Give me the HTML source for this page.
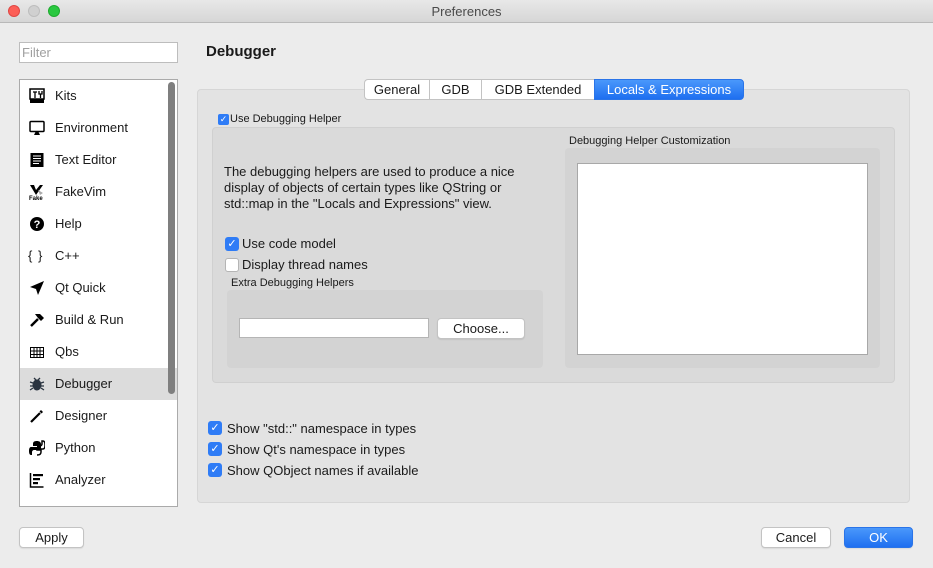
<!DOCTYPE html>
<html><head><style>
*{box-sizing:border-box;margin:0;padding:0}
body{width:933px;height:568px;background:#ececec;font-family:"Liberation Sans",sans-serif;color:#1a1a1a;position:relative;overflow:hidden;font-size:13px}
.a{position:absolute}
.title{left:0;top:0;width:933px;height:23px;background:linear-gradient(#e8e8e8,#d6d6d6);border-bottom:1px solid #b9b9b9;text-align:center;line-height:23px;color:#4a4a4a;font-size:13px}
.dot{top:5px;width:12px;height:12px;border-radius:50%}
.item{left:20px;width:147px;height:32px;line-height:32px;padding-left:35px;font-size:13px}
.ic{position:absolute;left:9px;top:8px;width:16px;height:16px}
.cb{width:14px;height:14px;border-radius:3px;background:#2f7cf6;color:#fff;font-size:11px;line-height:14px;text-align:center}
.cbo{width:14px;height:14px;border-radius:3px;background:#fff;border:1px solid #b5b5b5}
.btn{background:#fff;border:1px solid #c3c3c3;border-radius:4px;text-align:center;font-size:13px;box-shadow:0 1px 1px rgba(0,0,0,.08)}
.tab{top:79px;height:21px;line-height:20px;text-align:center;background:#fff;border:1px solid #c3c3c3;border-right:none;font-size:13px}
</style></head><body>
<div class="a title">Preferences</div>
<div class="a dot" style="left:8px;background:#fc5f57;border:1px solid #df4744"></div>
<div class="a dot" style="left:28px;background:#d0d0d0;border:1px solid #bdbdbd"></div>
<div class="a dot" style="left:48px;background:#2ac840;border:1px solid #1eab2e"></div>

<div class="a" style="left:19px;top:42px;width:159px;height:21px;background:#fff;border:1px solid #bdbdbd;color:#a0a0a0;font-size:13px;line-height:19px;padding-left:2px">Filter</div>

<div class="a" style="left:19px;top:79px;width:159px;height:428px;background:#fff;border:1px solid #aaa;overflow:hidden">
</div>
<div class="a" style="left:20px;top:368px;width:157px;height:32px;background:#dcdcdc"></div>
<div class="a" style="left:168px;top:82px;width:7px;height:312px;background:#7f7f7f;border-radius:4px"></div>

<div class="a item" style="top:80px"><svg class="ic" viewBox="0 0 16 16"><rect x="1" y="1" width="14" height="10" fill="none" stroke="#000" stroke-width="1.5"/><rect x="1" y="11" width="14" height="4" fill="#000"/><path d="M4 4h4M6 4v6M10 3v3h3V3M11.5 6v4" stroke="#000" stroke-width="1.3" fill="none"/></svg>Kits</div>
<div class="a item" style="top:112px"><svg class="ic" viewBox="0 0 16 16"><rect x="1" y="1.5" width="14" height="10" rx="1" fill="none" stroke="#000" stroke-width="1.5"/><path d="M5 15h6l-1.5-3h-3z" fill="#000"/></svg>Environment</div>
<div class="a item" style="top:144px"><svg class="ic" viewBox="0 0 16 16"><rect x="1.5" y="1" width="13" height="14" fill="#000"/><path d="M4 4h8M4 6.5h8M4 9h8M4 11.5h6" stroke="#fff" stroke-width="1"/></svg>Text Editor</div>
<div class="a item" style="top:176px"><svg class="ic" viewBox="0 0 16 16"><path d="M1 1h4l2 5 4-5h3L7 11z" fill="#000"/><path d="M9 6l5 3-3 2z" fill="#aaa"/><text x="0" y="16" font-size="6" font-family="Liberation Sans" font-weight="bold">Fake</text></svg>FakeVim</div>
<div class="a item" style="top:208px"><svg class="ic" viewBox="0 0 16 16"><circle cx="8" cy="8" r="7" fill="#000"/><text x="8" y="12" font-size="11" font-weight="bold" fill="#fff" text-anchor="middle" font-family="Liberation Sans">?</text></svg>Help</div>
<div class="a item" style="top:240px"><span class="a" style="left:8px;font-size:13px;letter-spacing:1px">{ }</span>C++</div>
<div class="a item" style="top:272px"><svg class="ic" viewBox="0 0 16 16"><path d="M15 1L1 7l6 2 2 6z" fill="#000"/></svg>Qt Quick</div>
<div class="a item" style="top:304px"><svg class="ic" viewBox="0 0 16 16"><path d="M2 14l7-7" stroke="#000" stroke-width="2.5"/><path d="M6 2l5 0 4 4-3 3-3-3z" fill="#000"/></svg>Build &amp; Run</div>
<div class="a item" style="top:336px"><svg class="ic" viewBox="0 0 16 16"><rect x="1.5" y="3.5" width="13" height="10" fill="none" stroke="#000"/><path d="M1.5 7h13M1.5 10.5h13M5 3.5v10M8 3.5v10M11 3.5v10" stroke="#000"/></svg>Qbs</div>
<div class="a item" style="top:368px"><svg class="ic" viewBox="0 0 16 16"><ellipse cx="8" cy="9" rx="4.5" ry="5.5" fill="#2a3440"/><path d="M1 6l3 1M1 10h3M1 14l3-2M15 6l-3 1M15 10h-3M15 14l-3-2M5 2l2 2M11 2l-2 2" stroke="#2a3440" stroke-width="1.3"/></svg>Debugger</div>
<div class="a item" style="top:400px"><svg class="ic" viewBox="0 0 16 16"><path d="M2 14l9-9" stroke="#000" stroke-width="2.2"/><path d="M12 2l2 2-1.5 1.5-2-2z" fill="#000"/></svg>Designer</div>
<div class="a item" style="top:432px"><svg class="ic" viewBox="0 0 16 16"><path d="M8 1c-3 0-4 1-4 3v2h4v1H2c-1 0-2 1-2 4s1 4 2 4h1v-3c0-1 1-2 2-2h5c1 0 2-1 2-2V4c0-2-2-3-4-3z" fill="#000"/><path d="M8 15c3 0 4-1 4-3v-2H8V9h6c1 0 2-1 2-4s-1-4-2-4h-1v3c0 1-1 2-2 2" fill="none" stroke="#000" stroke-width="1.5"/></svg>Python</div>
<div class="a item" style="top:464px"><svg class="ic" viewBox="0 0 16 16"><path d="M1.5 1v14h13" stroke="#000" stroke-width="1.5" fill="none"/><rect x="4" y="2" width="10" height="2.2" fill="#000"/><rect x="4" y="6" width="7" height="2.2" fill="#000"/><rect x="4" y="10" width="5" height="2.2" fill="#000"/></svg>Analyzer</div>

<div class="a" style="left:206px;top:43px;font-size:15px;font-weight:bold">Debugger</div>

<div class="a" style="left:197px;top:89px;width:713px;height:414px;background:#e3e3e3;border:1px solid #d6d6d6;border-radius:4px"></div>
<div class="a tab" style="left:364px;width:65px;border-radius:4px 0 0 4px">General</div>
<div class="a tab" style="left:429px;width:52px">GDB</div>
<div class="a tab" style="left:481px;width:113px">GDB Extended</div>
<div class="a tab" style="left:594px;width:150px;background:linear-gradient(#4a98fb,#1e6ff0);color:#fff;border:1px solid #2a74e8;border-radius:0 4px 4px 0">Locals &amp; Expressions</div>

<div class="a cb" style="left:218px;top:114px;width:11px;height:11px;font-size:9px;line-height:11px;border-radius:2px">✓</div>
<div class="a" style="left:230px;top:113px;font-size:11px">Use Debugging Helper</div>

<div class="a" style="left:212px;top:127px;width:683px;height:256px;background:#dadada;border:1px solid #d0d0d0;border-radius:4px"></div>
<div class="a" style="left:224px;top:164px;font-size:13px;line-height:16px">The debugging helpers are used to produce a nice<br>display of objects of certain types like QString or<br>std::map in the "Locals and Expressions" view.</div>
<div class="a cb" style="left:225px;top:237px">✓</div>
<div class="a" style="left:242px;top:236px">Use code model</div>
<div class="a cbo" style="left:225px;top:258px"></div>
<div class="a" style="left:242px;top:257px">Display thread names</div>
<div class="a" style="left:231px;top:277px;font-size:11px">Extra Debugging Helpers</div>
<div class="a" style="left:227px;top:290px;width:316px;height:78px;background:#d3d3d3;border-radius:4px"></div>
<div class="a" style="left:239px;top:318px;width:190px;height:20px;background:#fff;border:1px solid #b5b5b5"></div>
<div class="a btn" style="left:437px;top:318px;width:88px;height:21px;line-height:19px">Choose...</div>

<div class="a" style="left:569px;top:135px;font-size:11px">Debugging Helper Customization</div>
<div class="a" style="left:565px;top:148px;width:315px;height:220px;background:#d3d3d3;border-radius:4px"></div>
<div class="a" style="left:577px;top:163px;width:291px;height:192px;background:#fff;border:1px solid #a8a8a8"></div>

<div class="a cb" style="left:208px;top:421px">✓</div>
<div class="a" style="left:227px;top:421px">Show "std::" namespace in types</div>
<div class="a cb" style="left:208px;top:442px">✓</div>
<div class="a" style="left:227px;top:442px">Show Qt's namespace in types</div>
<div class="a cb" style="left:208px;top:463px">✓</div>
<div class="a" style="left:227px;top:463px">Show QObject names if available</div>

<div class="a btn" style="left:19px;top:527px;width:65px;height:21px;line-height:19px">Apply</div>
<div class="a btn" style="left:761px;top:527px;width:70px;height:21px;line-height:19px">Cancel</div>
<div class="a btn" style="left:844px;top:527px;width:69px;height:21px;line-height:19px;background:linear-gradient(#4a98fb,#1e6ff0);color:#fff;border-color:#2a74e8">OK</div>
</body></html>
